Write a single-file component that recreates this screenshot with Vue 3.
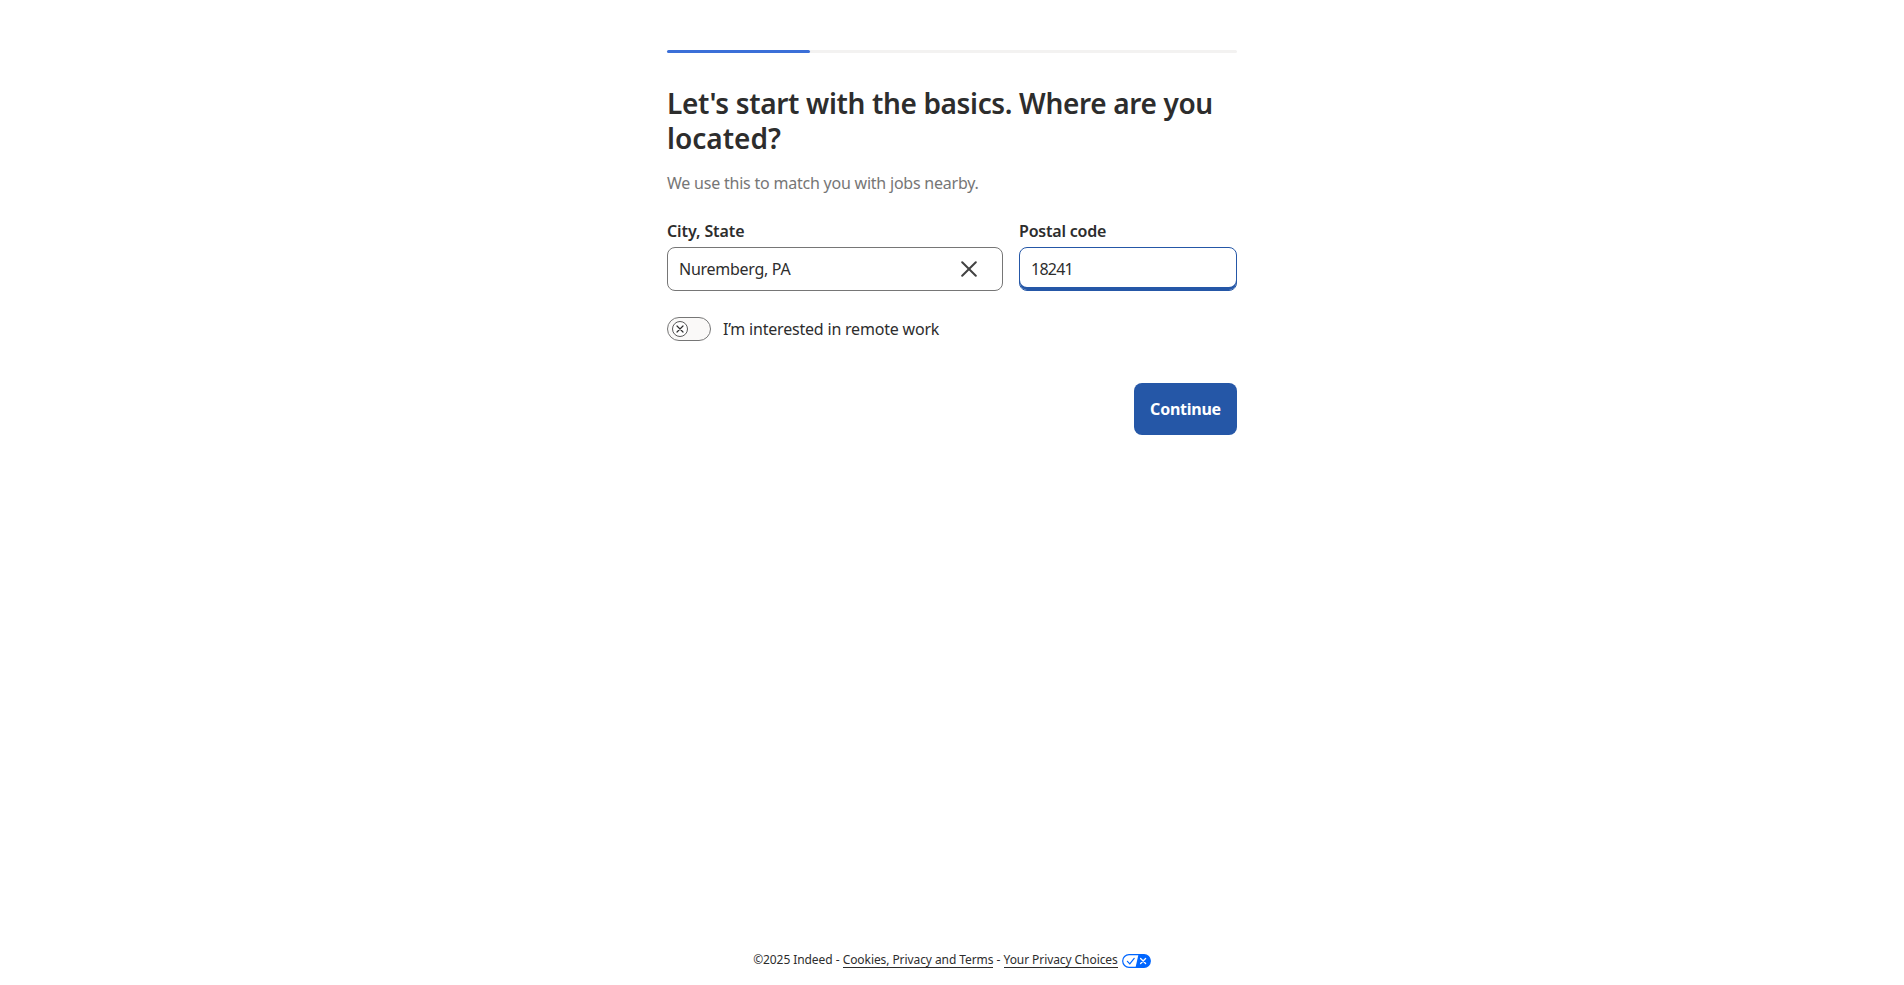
<script setup>
import { ref } from 'vue'

const city = ref('Nuremberg, PA')
const postal = ref('18241')
const progress = ref(25)
</script>

<template>
  <div class="page">
    <main class="content">
      <div class="progress"><div class="bar" :style="{ width: progress + '%' }"></div></div>
      <h1><span class="line one">Let's start with the basics. Where are you</span> <span class="line two">located?</span></h1>
      <p class="hint">We use this to match you with jobs nearby.</p>
      <form class="fields" @submit.prevent>
        <div class="field">
          <label for="city" class="city-label">City, State</label>
          <div class="box">
            <input id="city" v-model="city" class="city-input" type="text" />
            <button class="clear" type="button" aria-label="Clear" @click="city = ''">
              <svg width="16" height="16" viewBox="0 0 16 16"><path d="M1.2 1.2 14.8 14.8M14.8 1.2 1.2 14.8" /></svg>
            </button>
          </div>
        </div>
        <div class="field">
          <label for="postal" class="postal-label">Postal code</label>
          <div class="box active"><input id="postal" v-model="postal" class="postal-input" type="text" /></div>
        </div>
      </form>
      <div class="remote">
        <span class="switch" role="switch" aria-checked="false">
          <span class="knob"><svg width="8" height="8" viewBox="0 0 8 8"><path d="M1 1 7 7M7 1 1 7" /></svg></span>
        </span>
        <span class="remote-text">I’m interested in remote work</span>
      </div>
      <div class="actions"><button class="continue" type="button"><span>Continue</span></button></div>
    </main>
    <footer>
      <span class="copy">©2025 Indeed</span>
      <span class="dash">-</span>
      <a class="terms">Cookies, Privacy and Terms</a>
      <span class="dash">-</span>
      <a class="choices">Your Privacy Choices</a>
      <svg class="privacy" width="29" height="14" viewBox="0 0 29 14">
        <rect x=".7" y=".7" width="27.6" height="12.6" rx="6.3" fill="#fff" />
        <path d="M16.4.7H22a6.3 6.3 0 0 1 0 12.6h-8.4Z" fill="#06f" />
        <rect x=".7" y=".7" width="27.6" height="12.6" rx="6.3" fill="none" stroke="#06f" stroke-width="1.2" />
        <path d="m5.4 7.3 2.4 2.5 4.4-5.4" fill="none" stroke="#06f" stroke-width="1.2" stroke-linecap="round" />
        <path d="m18.6 4.5 5 5m0-5-5 5" stroke="#fff" stroke-width="1.3" stroke-linecap="round" />
      </svg>
    </footer>
  </div>
</template>

<style>
body { background: #fff; }
</style>

<style scoped>
* { box-sizing: border-box; }
.page {
  height: 985px;
  display: flex;
  flex-direction: column;
  align-items: center;
  justify-content: space-between;
  overflow: hidden;
  color: #2d2d2d;
  font-family: "Noto Sans", sans-serif;
  font-size: 16px;
  line-height: 24px;
}
.content { width: 570px; padding-top: 50px; }
.progress { height: 3px; border-radius: 2px; background: #f3f2f1; }
.bar { height: 3px; border-radius: 2px; background: #3b6fd8; }
h1 { margin: 33px 0 0; font-size: 28px; line-height: 35px; font-weight: 600; }
.line { display: block; white-space: nowrap; width: max-content; }
.one { letter-spacing: -0.35px; }
.hint { margin: 15px 0 0; width: max-content; line-height: 24px; color: #767676; letter-spacing: -0.22px; }
.fields { display: grid; grid-template-columns: 336px 218px; gap: 16px; margin-top: 24px; }
label { display: block; width: max-content; font-weight: 600; line-height: 24px; margin-bottom: 4px; }
.city-label { letter-spacing: -0.1px; }
.postal-label { letter-spacing: -0.2px; }
.box {
  display: flex;
  align-items: center;
  height: 44px;
  border: 1px solid #767676;
  border-radius: 8px;
  padding: 0 22px 0 11px;
}
.box.active { border: 1px solid #2557a7; box-shadow: inset 0 -3px #2557a7; }
input {
  flex: 1;
  min-width: 0;
  height: 36px;
  padding: 0;
  border: 0;
  outline: 0;
  background: transparent;
  font: inherit;
  color: inherit;
}
.city-input { letter-spacing: -0.28px; }
.postal-input { letter-spacing: -0.75px; }
.clear { display: grid; place-items: center; width: 22px; height: 32px; padding: 0; border: 0; background: none; }
.clear path { stroke: #424242; stroke-width: 2; stroke-linecap: round; }
.remote { display: flex; align-items: center; gap: 12px; margin-top: 26px; height: 24px; }
.remote-text { letter-spacing: -0.2px; }
.switch { width: 44px; height: 24px; border: 1px solid #767676; border-radius: 12px; background: #faf9f8; padding: 3px 4px; }
.knob { display: grid; place-items: center; width: 16px; height: 16px; border: 1px solid #595959; border-radius: 50%; background: #fff; }
.knob path { stroke: #2d2d2d; stroke-width: 1.2; stroke-linecap: round; }
.actions { display: flex; justify-content: flex-end; margin-top: 42px; }
.continue {
  width: 103px;
  height: 52px;
  padding: 0;
  border: 0;
  border-radius: 8px;
  background: #2557a7;
  color: #fff;
  font: 700 16px/24px "Noto Sans", sans-serif;
  letter-spacing: -0.25px;
}
footer { display: flex; height: 33px; font-size: 12px; line-height: 16px; color: #2d2d2d; gap: 3.2px; letter-spacing: -0.08px; }
footer a { height: 16px; border-bottom: 1px solid #2d2d2d; white-space: nowrap; }
.privacy { margin: 2px 0 0 1px; }
</style>
